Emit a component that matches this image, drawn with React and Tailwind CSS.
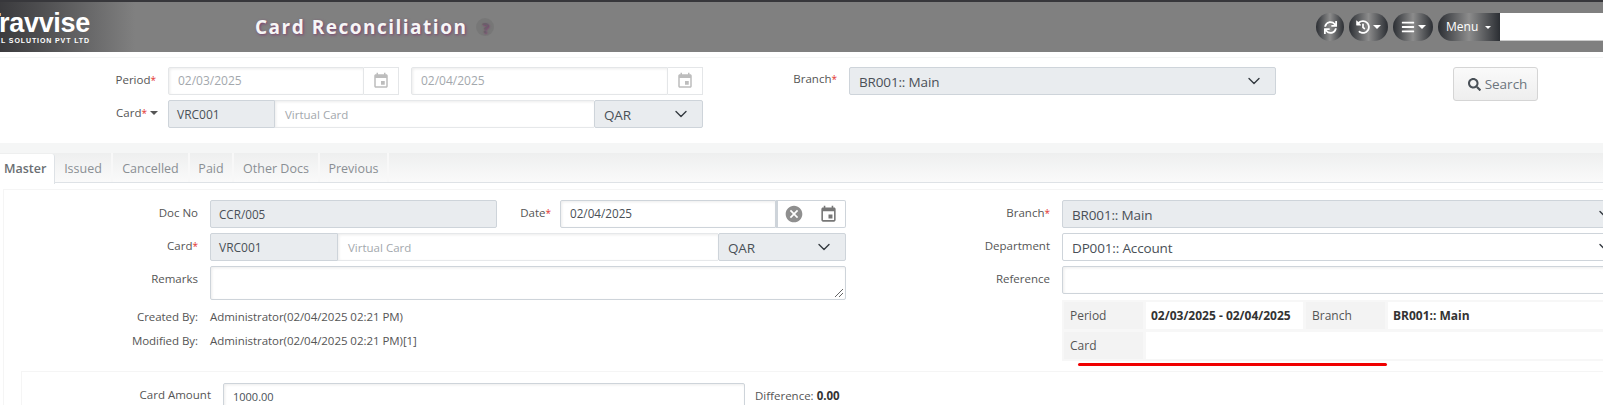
import React from "react";
import { FaSync, FaHistory, FaBars, FaSearch } from "react-icons/fa";

function EventIcon({ className }) {
  return (
    <svg viewBox="0 0 24 24" fill="currentColor" className={className}>
      <path d="M17 12h-5v5h5v-5zM16 1v2H8V1H6v2H5c-1.11 0-1.99.9-1.99 2L3 19c0 1.1.89 2 2 2h14c1.1 0 2-.9 2-2V5c0-1.1-.9-2-2-2h-1V1h-2zm3 18H5V8h14v11z" />
    </svg>
  );
}

function CancelIcon({ className }) {
  return (
    <svg viewBox="0 0 24 24" fill="currentColor" className={className}>
      <path d="M12 2C6.47 2 2 6.47 2 12s4.47 10 10 10 10-4.47 10-10S17.53 2 12 2zm5 13.59L15.59 17 12 13.41 8.41 17 7 15.59 10.59 12 7 8.41 8.41 7 12 10.59 15.59 7 17 8.41 13.41 12 17 15.59z" />
    </svg>
  );
}

function Chevron() {
  return (
    <svg viewBox="0 0 16 16" fill="none" stroke="#343a40" strokeWidth="1.4" strokeLinecap="round" strokeLinejoin="round" className="mb-[3px] h-4 w-4 shrink-0">
      <path d="M3 5.5l5 5 5-5" />
    </svg>
  );
}

function Caret() {
  return <span className="ml-[3px] inline-block h-0 w-0 border-x-[4px] border-t-[4px] border-x-transparent border-t-current" />;
}

function Star() {
  return <span className="text-[10px] text-[#e3342f]">*</span>;
}

function Select({ value, width, disabled }) {
  return (
    <div className={`flex h-[28px] shrink-0 items-center justify-between rounded-[2px] border border-[#ced4da] pt-[2px] pr-[13px] pl-[9px] text-[13.5px] tracking-[-0.15px] text-[#495057] ${width} ${disabled ? "bg-[#e9ecef]" : "bg-white"}`}>
      <span>{value}</span>
      <Chevron />
    </div>
  );
}

const inputShadow = "shadow-[inset_1px_1px_3px_rgba(0,0,0,0.08)]";

function CardField({ nameWidth, codeWidth, qarWidth }) {
  return (
    <div className="flex h-[28px]">
      <div className={`flex items-center rounded-l-[2px] border border-[#ced4da] bg-[#e9ecef] pt-[1px] pl-[8px] text-[12px] text-[#495057] ${codeWidth}`}>
        VRC001
      </div>
      <div className={`flex items-center border-y border-[#e6e8ea] bg-white pt-[1px] pl-[10px] text-[11.5px] text-[#a3a8ad] ${inputShadow} ${nameWidth}`}>
        Virtual Card
      </div>
      <Select value="QAR" width={qarWidth} disabled />
    </div>
  );
}

function DateRange({ value }) {
  return (
    <div className="flex h-[28px]">
      <div className={`flex flex-1 items-center rounded-l-[2px] border border-[#e4e6e8] bg-white pl-[9px] text-[12px] text-[#a3a8ad] ${inputShadow}`}>
        {value}
      </div>
      <div className="flex w-[35px] items-center justify-center border border-l-0 border-[#e4e6e8] text-[#bdbdbd]">
        <EventIcon className="h-[18px] w-[18px]" />
      </div>
    </div>
  );
}

function Row({ label, children, labelWidth = "w-[194px]" }) {
  return (
    <div className="flex">
      <div className={`shrink-0 pt-[4px] text-right text-[11.5px] leading-[18px] text-[#555] ${labelWidth}`}>{label}</div>
      <div className="ml-[12px] min-w-0 flex-1">{children}</div>
    </div>
  );
}

function Info({ label, value }) {
  return (
    <div className="flex h-[24px] items-center text-[11.5px] tracking-[-0.05px] text-[#555]">
      <div className="w-[194px] text-right">{label}</div>
      <div className="ml-[12px]">{value}</div>
    </div>
  );
}

const tabs = ["Issued", "Cancelled", "Paid", "Other Docs", "Previous"];
const tabWidths = ["w-[58px]", "w-[77px]", "w-[44px]", "w-[86px]", "w-[69px]"];

export default function App() {
  return (
    <div className="h-[405px] w-[1603px] overflow-hidden bg-white font-['Open_Sans',sans-serif]">
      {/* Header */}
      <header className="flex h-[52px] items-center border-t-2 border-[#37373b] bg-[linear-gradient(90deg,#3b3b3e,#4e4e50_40px,#808080_135px)]">
        <div className="flex w-[90px] shrink-0 flex-col items-end overflow-hidden whitespace-nowrap font-['Liberation_Sans',sans-serif] text-white">
          <span className="text-[27px] leading-[26px] font-bold tracking-[-0.3px]">Travvise</span>
          <span className="text-[7px] leading-[9px] font-bold tracking-[0.9px]">TRAVEL SOLUTION PVT LTD</span>
        </div>
        <h1 className="ml-[165px] text-[19px] font-bold tracking-[1.5px] text-[#f6f6f6] [text-shadow:1px_1px_3px_#7d3f6d]">
          Card Reconciliation
        </h1>
        <span className="ml-[9px] flex h-[18px] w-[18px] items-center justify-center rounded-full bg-[#777] text-[14px] font-bold text-[#6a5f6a] [text-shadow:1px_1px_2px_#7d3f6d]">?</span>

        <div className="ml-auto flex h-[28px] items-center text-white">
          <button className="flex h-[28px] w-[28px] items-center justify-center rounded-full bg-[linear-gradient(90deg,#2b2e33,#8c8c8c_50%,#2b2e33)] text-[13px]">
            <FaSync />
          </button>
          <button className="ml-[5px] flex h-[28px] w-[39px] items-center justify-center rounded-full bg-[linear-gradient(90deg,#2b2e33,#8c8c8c_50%,#2b2e33)] text-[14px]">
            <FaHistory />
            <Caret />
          </button>
          <button className="ml-[5px] flex h-[28px] w-[40px] items-center justify-center rounded-full bg-[linear-gradient(90deg,#2b2e33,#8c8c8c_50%,#2b2e33)] text-[14px]">
            <FaBars />
            <Caret />
          </button>
          <button className="ml-[5px] flex h-[28px] w-[62px] items-center rounded-l-full bg-[linear-gradient(90deg,#2b2e33,#8c8c8c_50%,#2b2e33)] pl-[8px] text-[12px]">
            Menu
            <span className="ml-[7px] inline-block h-0 w-0 border-x-[3px] border-t-[3px] border-x-transparent border-t-current" />
          </button>
          <div className="h-[28px] w-[103px] border-b border-[#ccc] bg-white" />
        </div>
      </header>

      {/* Filter */}
      <div className="mt-[5px] flex h-[86px] border-t border-[#f4f5f5] pt-[9px]">
        <div className="ml-[168px] flex w-[535px] shrink-0 flex-col gap-[5px]">
          <div className="relative flex gap-[12px]">
            <div className="absolute right-full mr-[12px] pt-[4px] text-[11.5px] leading-[18px] whitespace-nowrap text-[#555]">
              Period<Star />
            </div>
            <div className="w-[231px]"><DateRange value="02/03/2025" /></div>
            <div className="flex-1"><DateRange value="02/04/2025" /></div>
          </div>
          <div className="relative">
            <div className="absolute right-full mr-[10px] flex items-center pt-[4px] text-[11.5px] leading-[18px] whitespace-nowrap text-[#555]">
              Card<Star />
              <Caret />
            </div>
            <CardField codeWidth="w-[107px]" nameWidth="w-[319px]" qarWidth="w-[109px]" />
          </div>
        </div>
        <div className="ml-[89px] w-[45px] pt-[3px] text-right text-[11.5px] leading-[18px] whitespace-nowrap text-[#555]">
          Branch<Star />
        </div>
        <div className="ml-[12px]">
          <Select value="BR001:: Main" width="w-[427px]" disabled />
        </div>
        <button className="ml-[177px] flex h-[34px] w-[85px] items-center justify-center gap-[4px] rounded-[3px] border border-[#d5d5d5] bg-[linear-gradient(180deg,#fafafa,#eeeeee)] pt-[1px] pl-[4px] text-[13.5px] text-[#6c757d]">
          <FaSearch className="text-[13px] text-[#495057]" />
          Search
        </button>
      </div>

      {/* Tabs */}
      <div className="h-[10px] bg-[#f5f6f6]" />
      <nav className="flex h-[30px] border-b border-[#dee2e6] bg-[linear-gradient(180deg,#eeefef,#fafafa)] text-[12.5px] text-[#8a8f94]">
        <div className="mt-[1px] flex h-[30px] w-[55px] items-center rounded-tr-[3px] border-r border-[#dee2e6] bg-white pt-[1px] pl-[4px] text-[12.5px] font-semibold text-[#6b6f73]">
          Master
        </div>
        {tabs.map((t, i) => (
          <div key={t} className={`flex items-center justify-center border-r-2 border-[#f8f8f8] pt-[3px] ${tabWidths[i]}`}>
            {t}
          </div>
        ))}
      </nav>

      {/* Master form */}
      <div className="mt-[6px] ml-[3px] border-t border-l border-[#f5f5f5] pt-[10px]">
        <div className="flex">
          <div className="flex w-[842px] shrink-0 flex-col gap-[5px]">
            <div className="flex">
              <div className="w-[194px] pt-[4px] text-right text-[11.5px] leading-[18px] text-[#555]">Doc No</div>
              <div className="ml-[12px] flex h-[28px] w-[287px] items-center rounded-[2px] border border-[#ced4da] bg-[#e9ecef] pt-[1px] pl-[8px] text-[11.7px] text-[#495057]">
                CCR/005
              </div>
              <div className="w-[54px] pt-[4px] text-right text-[11.5px] leading-[18px] text-[#555]">
                Date<Star />
              </div>
              <div className="ml-[9px] flex h-[28px] w-[286px]">
                <div className={`flex flex-1 items-center rounded-l-[2px] border border-[#ced4da] bg-white pl-[9px] text-[11.7px] text-[#495057] ${inputShadow}`}>
                  02/04/2025
                </div>
                <div className="flex w-[70px] items-center gap-[15px] rounded-r-[2px] border border-l-2 border-[#ced4da] pl-[6px] text-[#8f8f8f]">
                  <CancelIcon className="h-[20px] w-[20px]" />
                  <EventIcon className="h-[19px] w-[19px] text-[#777]" />
                </div>
              </div>
            </div>
            <Row label={<>Card<Star /></>}>
              <CardField codeWidth="w-[128px]" nameWidth="w-[380px]" qarWidth="w-[128px]" />
            </Row>
            <Row label="Remarks">
              <div className={`relative h-[34px] w-[636px] rounded-[2px] border border-[#ced4da] bg-white ${inputShadow}`}>
                <svg viewBox="0 0 10 10" stroke="#666" className="absolute right-[1px] bottom-[1px] h-[10px] w-[10px]">
                  <path d="M1 9L9 1M5 9L9 5" />
                </svg>
              </div>
            </Row>
            <div>
              <Info label="Created By:" value="Administrator(02/04/2025 02:21 PM)" />
              <Info label="Modified By:" value="Administrator(02/04/2025 02:21 PM)[1]" />
            </div>
          </div>

          <div className="flex w-[757px] shrink-0 flex-col gap-[5px]">
            <Row label={<>Branch<Star /></>} labelWidth="w-[204px]">
              <Select value="BR001:: Main" width="w-[565px]" disabled />
            </Row>
            <Row label="Department" labelWidth="w-[204px]">
              <Select value="DP001:: Account" width="w-[565px]" />
            </Row>
            <Row label="Reference" labelWidth="w-[204px]">
              <div className={`h-[28px] w-[565px] rounded-[2px] border border-[#ced4da] bg-white ${inputShadow}`} />
            </Row>
            <div className="ml-[216px] w-[565px]">
              <div className="mt-[1px] grid grid-cols-[79px_157px_79px_1fr] gap-[3px] bg-[#f7f7f7] p-[2px] text-[12px] leading-[27px]">
                <div className="bg-[#f3f3f3] pl-[6px] text-[#555]">Period</div>
                <div className="bg-white pl-[5px] font-bold text-[#333]">02/03/2025 - 02/04/2025</div>
                <div className="bg-[#f3f3f3] pl-[6px] text-[#555]">Branch</div>
                <div className="bg-white pl-[5px] font-bold text-[#333]">BR001:: Main</div>
                <div className="bg-[#f3f3f3] pl-[6px] text-[#555]">Card</div>
                <div className="col-span-3 h-[27px] bg-white" />
              </div>
              <div className="mt-[2px] ml-[16px] h-[3px] w-[309px] rounded-full bg-[#f00000]" />
            </div>
          </div>
        </div>

        {/* Amount */}
        <div className="mt-[5px] ml-[17px] flex border-t border-l border-[#f5f5f5] pt-[11px]">
          <div className="w-[189px] pt-[3px] text-right text-[11.5px] leading-[18px] text-[#555]">Card Amount</div>
          <div className={`ml-[12px] flex h-[28px] w-[522px] items-center rounded-[2px] border border-[#ced4da] bg-white pl-[9px] text-[11px] text-[#495057] ${inputShadow}`}>
            1000.00
          </div>
          <div className="ml-[10px] pt-[4px] text-[11.5px] leading-[18px] text-[#555]">
            Difference: <span className="font-bold text-[#333]">0.00</span>
          </div>
        </div>
      </div>
    </div>
  );
}
